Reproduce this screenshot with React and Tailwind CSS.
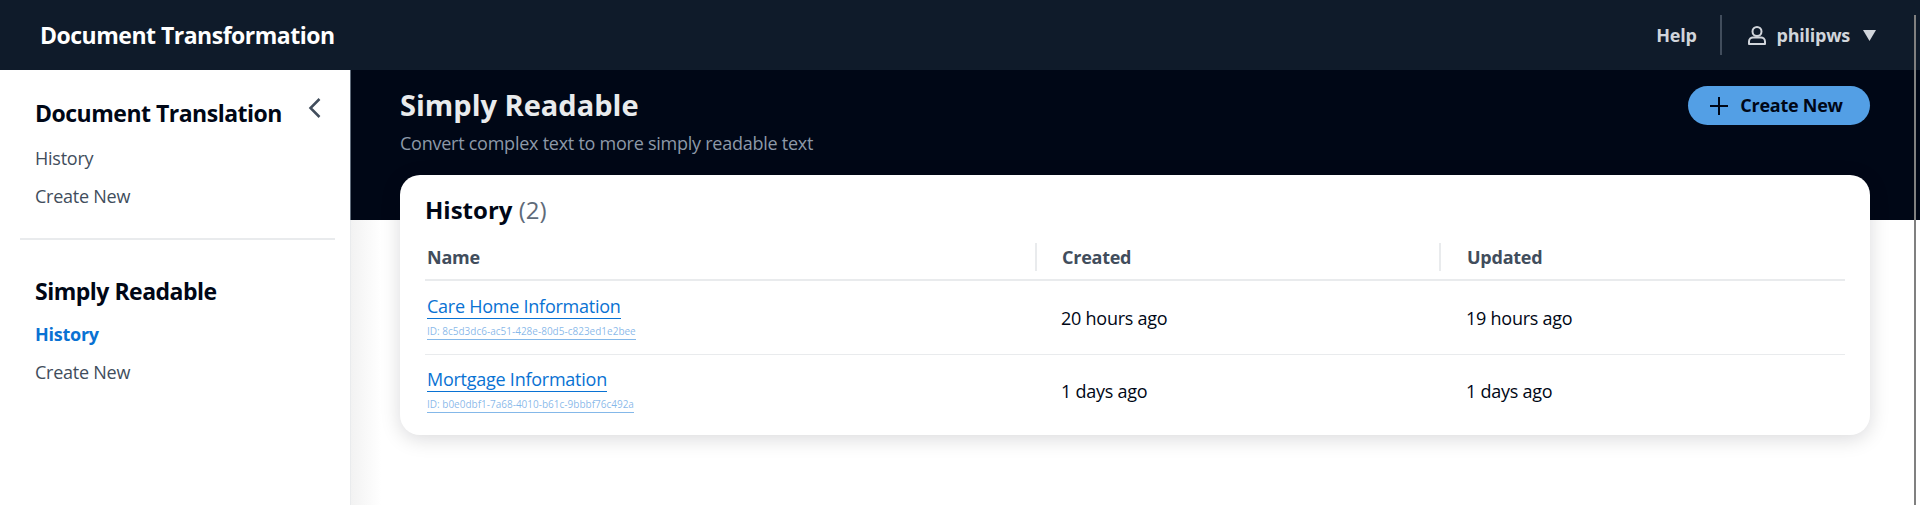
const rows = [
  {
    name: "Care Home Information",
    id: "ID: 8c5d3dc6-ac51-428e-80d5-c823ed1e2bee",
    created: "20 hours ago",
    updated: "19 hours ago",
  },
  {
    name: "Mortgage Information",
    id: "ID: b0e0dbf1-7a68-4010-b61c-9bbbf76c492a",
    created: "1 days ago",
    updated: "1 days ago",
  },
];

const NavLinks = ({ active }) => (
  <ul className="flex flex-col gap-[14px] text-[18px] leading-[24px] tracking-[-0.25px] text-[#414d5c]">
    <li className={active ? "font-bold text-[#0972d3]" : ""}>History</li>
    <li>Create New</li>
  </ul>
);

const App = () => {
  return (
    <div className="relative flex h-[505px] w-[1920px] flex-col overflow-hidden bg-white font-['Open_Sans',sans-serif]">
      <header className="flex h-[70px] shrink-0 items-center justify-between bg-[#0f1b2a] pl-[40px] pr-[44px]">
        <span className="text-[23px] font-bold tracking-[-0.5px] text-white">Document Transformation</span>
        <div className="flex h-[40px] items-center text-[18px] font-bold tracking-[-0.25px] text-[#d1d5db]">
          <span>Help</span>
          <span className="ml-[23px] mr-[26px] h-[40px] w-[2px] bg-[#414d5c]" />
          <svg viewBox="0 0 18 19" className="mr-[11px] h-[19px] w-[18px] fill-none stroke-[#d1d5db] stroke-2">
            <circle cx="9" cy="5.5" r="4.5" />
            <path d="M1 18v-2.5C1 13 3 11.5 5 11.5h8c2 0 4 1.5 4 4V18z" strokeLinejoin="round" />
          </svg>
          <span>philipws</span>
          <svg viewBox="0 0 13 11" className="ml-[13px] h-[11px] w-[13px] fill-[#d1d5db]">
            <path d="M0 0h13L6.5 11z" />
          </svg>
        </div>
      </header>
      <div className="flex min-h-0 flex-1">
        <aside className="w-[350px] shrink-0 bg-white">
          <div className="pl-[35px] pr-[30px] pt-[28px]">
            <div className="flex items-start justify-between">
              <h2 className="text-[23px] leading-[30px] font-bold tracking-[-0.5px] text-[#000716]">
                Document Translation
              </h2>
              <svg viewBox="0 0 13 20" className="-mr-[1px] h-[20px] w-[13px] fill-none stroke-[#414d5c] stroke-[2.5]">
                <path d="M11.5 1 2.5 10l9 9" />
              </svg>
            </div>
            <div className="mt-[18px]">
              <NavLinks />
            </div>
          </div>
          <div className="ml-[20px] mr-[15px] mt-[30px] h-[2px] bg-[#e9ebed]" />
          <div className="px-[35px] pt-[36px]">
            <h2 className="text-[23px] leading-[30px] font-bold tracking-[-0.5px] text-[#000716]">Simply Readable</h2>
            <div className="mt-[16px]">
              <NavLinks active />
            </div>
          </div>
        </aside>
        <main className="min-w-0 flex-1 border-l border-[#e9ebed] bg-gradient-to-r from-[#f2f2f2] to-white to-[30px]">
          <div className="-ml-px h-[150px] border-l border-[#5f6b7a] bg-[#000716] pl-[49px] pr-[50px]">
            <div className="flex items-start justify-between">
              <div className="pt-[16px]">
                <h1 className="text-[29px] leading-[38px] font-bold text-[#e9ebed]">Simply Readable</h1>
                <p className="mt-[7px] text-[18px] leading-[24px] tracking-[-0.25px] text-[#8d99a8]">
                  Convert complex text to more simply readable text
                </p>
              </div>
              <button className="mt-[16px] flex h-[39px] w-[182px] items-center justify-center gap-[12px] rounded-full bg-[#539fe5] pr-[5px] text-[18px] font-bold tracking-[-0.25px] text-[#000716]">
                <svg viewBox="0 0 18 18" className="h-[18px] w-[18px] fill-none stroke-[#000716] stroke-2">
                  <path d="M9 0v18M0 9h18" />
                </svg>
                Create New
              </button>
            </div>
          </div>
          <section className="relative ml-[49px] mr-[50px] -mt-[45px] rounded-[20px] bg-white px-[25px] pt-[19px] pb-[7px] shadow-[0_4px_20px_rgba(0,7,22,0.15)]">
            <h2 className="text-[24px] leading-[32px] font-bold text-[#000716]">
              History <span className="font-normal text-[#5f6b7a]">(2)</span>
            </h2>
            <table className="mt-[10px] w-full table-fixed border-collapse text-[18px] tracking-[-0.25px]">
              <colgroup>
                <col className="w-[610px]" />
                <col className="w-[404px]" />
                <col />
              </colgroup>
              <thead>
                <tr className="border-b-2 border-[#e9ebed] text-left font-bold text-[#414d5c]">
                  <th className="h-[44px] pl-[2px]">Name</th>
                  <th className="pl-[26px]">
                    <span className="-ml-[26px] border-l-2 border-[#e9ebed] py-[2px] pl-[25px]">Created</span>
                  </th>
                  <th className="pl-[27px]">
                    <span className="-ml-[27px] border-l-2 border-[#e9ebed] py-[2px] pl-[26px]">Updated</span>
                  </th>
                </tr>
              </thead>
              <tbody className="text-[#000716]">
                {rows.map((row, index) => (
                  <tr key={row.id} className={index === 0 ? "border-b border-[#e9ebed]" : ""}>
                    <td className={index === 0 ? "h-[74px] pl-[2px]" : "h-[74px] pb-[2px] pl-[2px]"}>
                      <a className="block w-fit border-b border-[#0972d3] text-[18px] leading-[24px] text-[#0972d3]">
                        {row.name}
                      </a>
                      <a className="mt-[4px] block w-fit border-b border-[#0972d3]/50 text-[10px] leading-[16px] tracking-normal text-[#0972d3]/50">
                        {row.id}
                      </a>
                    </td>
                    <td className={index === 0 ? "pl-[26px] pt-[2px]" : "pl-[26px]"}>{row.created}</td>
                    <td className={index === 0 ? "pl-[27px] pt-[2px]" : "pl-[27px]"}>{row.updated}</td>
                  </tr>
                ))}
              </tbody>
            </table>
          </section>
        </main>
      </div>
      {/* thin grey line running down the right edge of the capture */}
      <div className="absolute right-[4px] top-[15px] bottom-0 w-[2px] bg-[#808080]" />
    </div>
  );
};

export default App;
